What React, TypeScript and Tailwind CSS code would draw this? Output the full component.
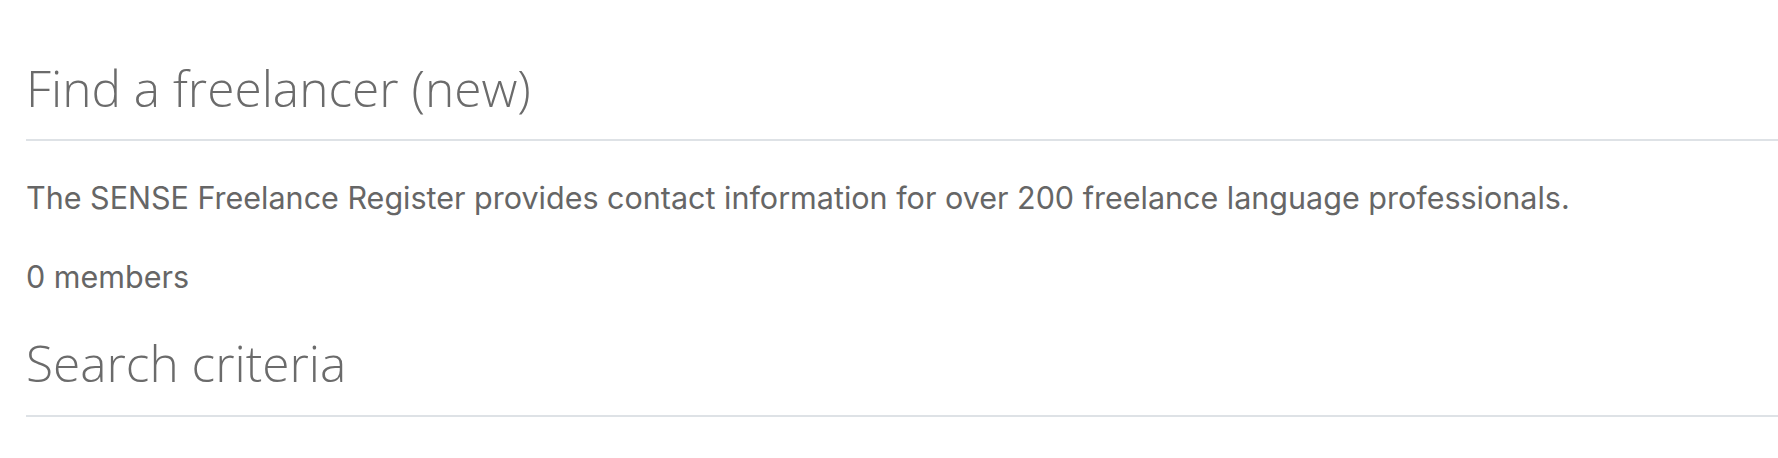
export default function App() {
  return (
    <div className="min-h-[458px] bg-white pl-[26px] pt-[59px] text-[#666666]">
      <h1 className="border-b-2 border-[#dee2e6] pb-[20px] font-['Open_Sans'] text-[49.6px] font-light leading-[1.2] text-[#6b6b6b]">
        Find a freelancer (new)
      </h1>

      <div className="pt-[34px] font-[Inter] text-[30.5px] leading-[1.5]">
        <p className="mb-[34px]">
          The SENSE Freelance Register provides contact information for over 200 freelance language
          professionals.
        </p>
        <p>0 members</p>
      </div>

      <h2 className="mt-[34px] border-b-2 border-[#dee2e6] pb-[21px] font-['Open_Sans'] text-[49.6px] font-light leading-[1.2] text-[#6b6b6b]">
        Search criteria
      </h2>
    </div>
  );
}
